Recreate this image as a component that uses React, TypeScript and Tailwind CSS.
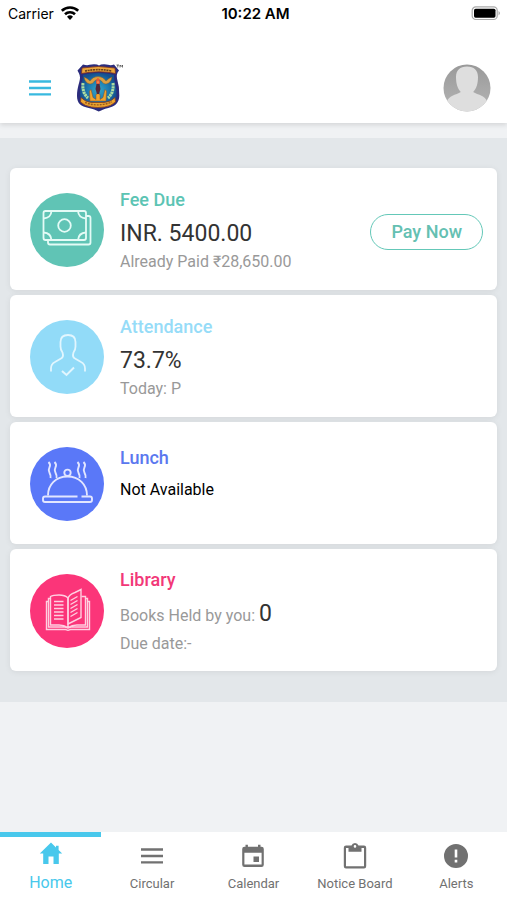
import type { ReactNode } from "react";

function WifiIcon() {
  return (
    <svg className="w-5 h-4" viewBox="0 0 20 16" fill="none" stroke="#000" strokeWidth="2.6">
      <path d="M1.8 4.800a11.800 11.800 0 0 1 16.400 0" />
      <path d="M5 8.200a7.200 7.200 0 0 1 10 0" />
      <path d="M10 14l-3-3.200a4.300 4.300 0 0 1 6 0z" fill="#000" stroke="none" />
    </svg>
  );
}

function BatteryIcon() {
  return (
    <svg className="w-8 h-4" viewBox="0 0 32 16">
      <rect x="1.2" y="0.900" width="25" height="12.600" rx="3.600" fill="#fff" stroke="#aaa" strokeWidth="1.200" />
      <rect x="3" y="2.700" width="21.500" height="9" rx="1.600" fill="#000" />
      <path d="M27.600 5q2.400 2.200 0 4.400z" fill="#999" />
    </svg>
  );
}

function LinesIcon() {
  return (
    <svg className="w-6 h-6" viewBox="0 0 24 24" stroke="currentColor" strokeWidth="2.300">
      <path d="M1 5.500h22M1 12h22M1 18.300h22" />
    </svg>
  );
}

function SchoolLogo() {
  return (
    <svg className="w-12 h-[50px]" viewBox="0 0 48 50" role="img" aria-label="School logo">
      <defs>
        <radialGradient id="shield">
          <stop offset="0" stopColor="#35a9c9" />
          <stop offset="0.6" stopColor="#1c78ae" />
          <stop offset="1" stopColor="#14508e" />
        </radialGradient>
      </defs>
      <path
        d="M7 1.500q4 1.200 6.500.3 4-1 7.500-.3l2 1 2-1q4-.7 7 .3 3 .8 6-.3L43 7.500q-3 3.500-2 8 2.500 8 2.300 17c0 8-5 11-11 12.500-4.500 1-7 2.500-9.600 3.500-3-1.500-5.500-2.600-10-3.500C5 43.500 1 40.500 1 33 1 24 4 19 4 14.500 4 11 2 9 1.500 7.500z"
        fill="#2b2c7c"
      />
      <path
        d="M7 12q15-4 31 0-.5 3 1 8 2 7 1.500 13-.5 7-9 8.500-6 1-9 3-4-2-9-3-8.500-1.500-9.500-8.500-.5-6 1.700-13Q7 16 7 12z"
        fill="url(#shield)"
      />
      <path d="M6 5q16-3 33 0l.5 5.500q-16-3.500-34 0z" fill="#eda73b" stroke="#792f20" strokeWidth=".8" />
      <path d="M9 8q13-2.700 27 0" fill="none" stroke="#69411d" strokeWidth="1.600" strokeDasharray="2 .7" />
      <path
        d="M8 14q3 1 6 4 3-4.500 8-4.500t8 4.500q3-3 6-4-1 6-6 7-3 0-4.500-3-1.500-1.500-3.500-1.500t-3.500 1.500q-1.500 3-4.500 3-5-1-6-7z"
        fill="#dca042"
        stroke="#81551d"
        strokeWidth=".4"
      />
      <g fill="none" stroke="#afdda0" strokeWidth="3" strokeDasharray="2.300 .6">
        <path d="M7 20q-1 10 5 15" />
        <path d="M37 20q1 10-5 15" />
      </g>
      <path
        d="M13.500 28l1.500-1.500 2 8 3 2v-5l2-1 2 1v5l3-2 2-8 1.500 1.500L30 38H14z"
        fill="#efa52f"
        stroke="#914d20"
        strokeWidth=".5"
      />
      <path d="M20.500 21h3l1 5-1.500 5h-2l-1.500-5z" fill="#56283b" />
      <path d="M22 14.500q3 4 1.500 6.500h-3q-1.500-3 1.500-6.500z" fill="#ed5632" />
      <path d="M22 17.500q1 2 0 3-1-1 0-3z" fill="#ffdf70" />
      <path d="M5 34.500q5 5 11 5h12q7-.5 11-5l.5 4.500q-5 4.500-11 5-7 1-13 0-7-1-11-5z" fill="#eda62f" stroke="#873c20" strokeWidth=".8" />
      <path d="M9 39.500q13 5 27-.5" fill="none" stroke="#9a5a21" strokeWidth="1.400" strokeDasharray="2 1" />
      <path d="M40.500 2h2.500m-1.200 0v2.500M44 4.500V2l1.200 1.500L46.500 2v2.500" fill="none" stroke="#333" strokeWidth=".7" />
    </svg>
  );
}

function Avatar() {
  return (
    <svg className="w-12 h-12" viewBox="0 0 48 48">
      <defs>
        <linearGradient id="avatarBg" x2="0" y2="1">
          <stop stopColor="#999" />
          <stop offset="1" stopColor="#b5b5b5" />
        </linearGradient>
        <clipPath id="avatarClip">
          <circle cx="24" cy="24" r="23.500" />
        </clipPath>
      </defs>
      <g clipPath="url(#avatarClip)">
        <path d="M0 0h48v48H0z" fill="url(#avatarBg)" />
        <path
          d="M24 2.500c-7 0-11 4-11 10.500 0 6 1.300 11.500 4.800 15-2.300 1.500-5.300 2.300-8.800 4-3.500 1.800-7 5-7 16h44c0-11-3.500-14.200-7-16-3.500-1.700-6.500-2.500-8.800-4 3.500-3.500 4.800-9 4.800-15 0-6.500-4-10.500-11-10.500z"
          fill="#dedede"
        />
      </g>
    </svg>
  );
}

function MoneyIcon() {
  return (
    <svg className="w-full h-full" viewBox="0 0 74 74" fill="none" stroke="#e4fbf6" strokeWidth="1.800">
      <rect x="13.500" y="18" width="42.500" height="29" rx="2" />
      <path d="M56 23h2.500a2 2 0 0 1 2 2v24.500a2 2 0 0 1-2 2H20a2 2 0 0 1-2-2V47" />
      <circle cx="34.500" cy="32.500" r="6.300" />
      <path d="M21.500 18q-.5 7-8 7.500M48 18q.5 7 8 7.500M21.500 47q-.5-7-8-7.500M48 47q.5-7 8-7.500" />
    </svg>
  );
}

function PersonIcon() {
  return (
    <svg className="w-full h-full" viewBox="0 0 74 74" fill="none" stroke="#e2f6fe" strokeWidth="1.800">
      <path d="M21 51.500v-3c0-3.500 1-5 4-6.500l6-3.500c2-1 2.500-3 1.500-6-1.500-2-2-3.500-2-6v-4.500c0-4.500 3-7 7.500-7s7.500 2.500 7.500 7v4.500c0 2.500-.5 4-2 6-1 3-.5 5 1.500 6l6 3.500c3 1.500 4 3 4 6.500v3" />
      <path d="M32 51l4.500 4 7.500-7.500" strokeWidth="2" />
    </svg>
  );
}

function LunchIcon() {
  return (
    <svg className="w-full h-full" viewBox="0 0 74 74" fill="none" stroke="#e2e6ff" strokeWidth="1.900">
      <path d="M18 48.500c0-11 8-19 19.500-19S57 37.500 57 48.500" />
      <circle cx="37.500" cy="25.800" r="3.200" />
      <path d="M47.500 49.500H15a2 2 0 0 0-2 2v1.500a2 2 0 0 0 2 2h45a2 2 0 0 0 2-2v-1.500a2 2 0 0 0-2-2h-8.500" />
      <path d="M18.500 15q2.500 2.500 1 5.300t0 5.400 1 5.300M24.500 15q2.500 2.500 1 5.300t0 5.400 1 5.300M47.500 15q2.500 2.500 1 5.300t0 5.400 1 5.300M53.500 15q2.500 2.500 1 5.300t0 5.400 1 5.300" />
    </svg>
  );
}

function BookIcon() {
  return (
    <svg className="w-full h-full" viewBox="0 0 74 74" fill="none" stroke="#ffd0e1" strokeWidth="1.400">
      <path d="M38 53.500q-4-2.500-9-2.500h-8.500V22.500Q23 21 29 21q6 0 9 3v29.500q4-2.500 9-2.500h8.500V22.500h-4M20.500 24.500h-2v28.500H35l3 1 3-1h16.500V24.500h-2M18.500 27.500h-2v28h19l2.500.8 2.500-.8h19v-28h-2" />
      <path d="M38 49V24.500q1-4 7-6l6-3v28L38 50z" />
      <path d="M24 27.500h9.500M24 31h9.500M24 34.500h9.500M24 38h9.500M24 41.500h9.500M24 45h9.500M40.500 26.500l7-4M40.500 30.500l7-4M40.500 34.500l7-4M40.500 38.500l7-4M40.500 42.500l7-4" />
    </svg>
  );
}

function HomeIcon() {
  return (
    <svg className="w-6 h-6" viewBox="0 0 24 24" fill="currentColor">
      <path d="M12 1.500L.8 12.500h3.400V23H9.500v-7.500h5V23h5.300V12.500h3.400l-3.600-3.500V4.800h-2.600v1.600z" />
    </svg>
  );
}

function CalendarIcon() {
  return (
    <svg className="w-6 h-6" viewBox="0 0 24 24" fill="currentColor" fillRule="evenodd">
      <path d="M4.500.8h2.400v2H17V.8h2.500v2h1a2.300 2.300 0 0 1 2.300 2.300v15.700a2.300 2.300 0 0 1-2.300 2.300H3.500a2.300 2.300 0 0 1-2.300-2.300V5.100a2.300 2.300 0 0 1 2.300-2.300h1zM3.400 8.800v11.800h17.200V8.800zM12.500 12.500H18V18h-5.500z" />
    </svg>
  );
}

function ClipboardIcon() {
  return (
    <svg className="w-6 h-[26px]" viewBox="0 0 24 26" fill="currentColor" fillRule="evenodd">
      <path d="M3 2.600h5.500a3.700 3.700 0 0 1 7 0H21a2.200 2.200 0 0 1 2.200 2.200v18.500a2.200 2.200 0 0 1-2.200 2.200H3a2.200 2.200 0 0 1-2.200-2.200V4.800A2.200 2.200 0 0 1 3 2.600zm9-.5a1.300 1.300 0 1 0 0 2.600 1.300 1.300 0 0 0 0-2.600zM3 5v18.300h18V5h-2.500v3.700h-13V5z" />
    </svg>
  );
}

function AlertIcon() {
  return (
    <svg className="w-6 h-6" viewBox="0 0 24 24" fill="currentColor" fillRule="evenodd">
      <path d="M12 0a12 12 0 1 0 0 24 12 12 0 0 0 0-24zm-1.300 5.500h2.600v8h-2.600zm0 10.300h2.600v2.600h-2.600z" />
    </svg>
  );
}

const tabs = [
  { label: "Circular", icon: <LinesIcon /> },
  { label: "Calendar", icon: <CalendarIcon /> },
  { label: "Notice Board", icon: <ClipboardIcon /> },
  { label: "Alerts", icon: <AlertIcon /> },
];

type CardProps = {
  icon: ReactNode;
  color: string;
  action?: ReactNode;
  children: ReactNode;
};

function Card({ icon, color, action, children }: CardProps) {
  return (
    <article className="flex items-center min-h-[122px] pt-0.5 pl-5 pr-3.5 bg-white rounded-md shadow-[0_1px_6px_rgba(0,0,0,0.07)]">
      <div className={`size-[74px] shrink-0 rounded-full ${color}`}>{icon}</div>
      <div className="flex-1 pl-4">{children}</div>
      {action}
    </article>
  );
}

function App() {
  return (
    <div className="flex flex-col min-h-screen bg-[#f0f2f4] font-[Roboto,sans-serif]">
      <header className="relative bg-white shadow-[0_2px_5px_rgba(0,0,0,0.12)]">
        <div className="grid grid-cols-3 items-center h-7 pl-2 pr-1 text-sm text-black font-[Inter,sans-serif]">
          <div className="flex items-center gap-1.5">
            Carrier <WifiIcon />
          </div>
          <div className="text-center text-[15px] font-semibold">10:22 AM</div>
          <div className="flex justify-end">
            <BatteryIcon />
          </div>
        </div>
        <div className="flex items-center h-[95px] pt-6 pl-7 pr-4">
          <button aria-label="Menu" className="text-[#39b9df]">
            <LinesIcon />
          </button>
          <a href="#" className="ml-6">
            <SchoolLogo />
          </a>
          <button aria-label="Profile" className="ml-auto">
            <Avatar />
          </button>
        </div>
      </header>

      <main className="flex-1 pt-[15px]">
        <section className="flex flex-col gap-[5px] px-2.5 pt-[30px] pb-[31px] bg-[#e3e7ea]">
          <Card
            icon={<MoneyIcon />}
            color="bg-[#60c4b5]"
            action={
              <button className="h-9 mt-1 px-5 border border-[#64c8b8] rounded-full text-lg font-medium text-[#64c0b2]">
                Pay Now
              </button>
            }
          >
            <h2 className="text-lg leading-6 font-medium text-[#5cc4b4]">Fee Due</h2>
            <p className="pt-1 text-[23px] leading-9 text-[#333]">INR. 5400.00</p>
            <p className="leading-5 text-[#999]">Already Paid ₹28,650.00</p>
          </Card>
          <Card icon={<PersonIcon />} color="bg-[#92dbf8]">
            <h2 className="text-lg leading-6 font-medium text-[#96dcf8]">Attendance</h2>
            <p className="pt-1 text-[23px] leading-9 text-[#333]">73.7%</p>
            <p className="leading-5 text-[#999]">Today: P</p>
          </Card>
          <Card icon={<LunchIcon />} color="bg-[#5a78f8]">
            <h2 className="text-lg leading-6 font-medium text-[#5b78ef]">Lunch</h2>
            <p className="pt-2 pb-5 leading-6 text-black">Not Available</p>
          </Card>
          <Card icon={<BookIcon />} color="bg-[#fb3579]">
            <h2 className="text-lg leading-6 font-medium text-[#f23878]">Library</h2>
            <p className="pt-1 leading-9 text-[#999]">
              Books Held by you: <span className="text-[23px] leading-9 text-[#333]">0</span>
            </p>
            <p className="leading-5 text-[#999]">Due date:-</p>
          </Card>
        </section>
      </main>

      <nav className="sticky bottom-0 grid grid-cols-5 h-[68px] bg-white text-[13px] text-[#717171]">
        <a href="#" className="flex flex-col items-center border-t-5 border-[#48c8ec] pt-1 text-base text-[#48c8ec]">
          <HomeIcon />
          <span className="pt-1.5 leading-6">Home</span>
        </a>
        {tabs.map((tab) => (
          <a href="#" key={tab.label} className="flex flex-col items-center pt-2.5 whitespace-nowrap">
            <div className="flex items-center justify-center h-7">{tab.icon}</div>
            <span className="pt-1 leading-5">{tab.label}</span>
          </a>
        ))}
      </nav>
    </div>
  );
}

export default App;
